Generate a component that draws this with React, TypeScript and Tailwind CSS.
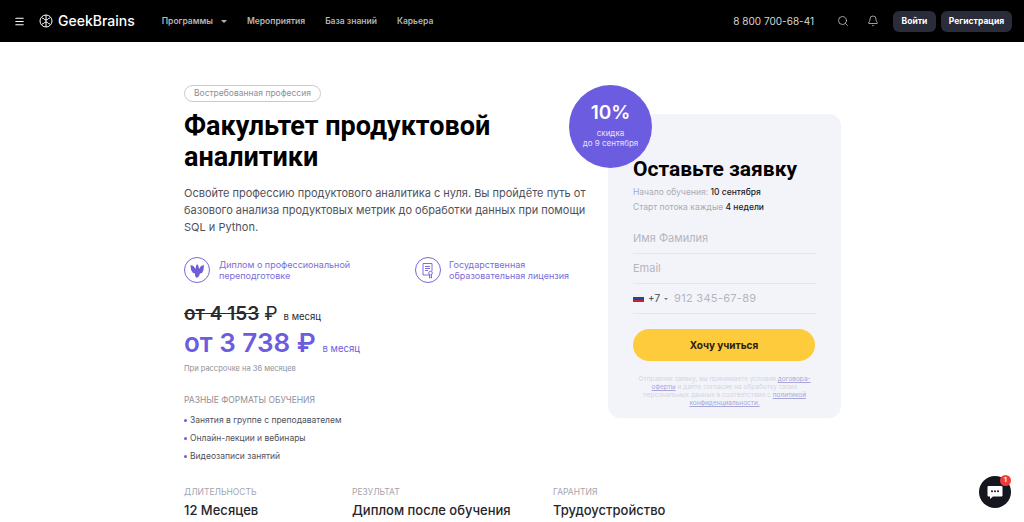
import { Bell, Menu, Search } from "lucide-react";

const navItems = ["Мероприятия", "База знаний", "Карьера"];
const formats = ["Занятия в группе с преподавателем", "Онлайн-лекции и вебинары", "Видеозаписи занятий"];
const stats = [
  { label: "ДЛИТЕЛЬНОСТЬ", value: "12 Месяцев", width: "w-[168px]" },
  { label: "РЕЗУЛЬТАТ", value: "Диплом после обучения", width: "w-[201px]" },
  { label: "ГАРАНТИЯ", value: "Трудоустройство", width: "w-[150px]" },
];

function Logo() {
  return (
    <svg width="14" height="14" viewBox="0 0 14 14" fill="none" stroke="white" strokeWidth="1">
      <circle cx="7" cy="7" r="6" />
      <path d="M7 1v12M3 4c2 0 2 2 4 2s2-2 4-2M3 10c2 0 2-2 4-2s2 2 4 2" />
    </svg>
  );
}

function Header() {
  return (
    <header className="h-[42px] shrink-0 bg-black flex items-center text-white font-['Inter',sans-serif]">
      <Menu className="ml-[14px] w-[11px] h-[11px]" strokeWidth={2.5} />
      <div className="ml-[14px] flex items-center gap-[5px]">
        <Logo />
        <span className="text-[14px] font-medium leading-none">GeekBrains</span>
      </div>
      <nav className="ml-[27px] flex items-center text-[8.5px] font-semibold text-[#b5b5b5]">
        <span>Программы</span>
        <span className="ml-[8px] mr-[20px] w-0 h-0 border-x-[3px] border-x-transparent border-t-[3px] border-t-[#b5b5b5]" />
        {navItems.map((item) => (
          <span key={item} className="mr-[20px]">{item}</span>
        ))}
      </nav>
      <span className="ml-auto text-[10px] text-[#d8d8d8]">8 800 700-68-41</span>
      <Search className="ml-[23px] w-[12px] h-[12px] text-[#d0d0d0]" strokeWidth={1.5} />
      <Bell className="ml-[18px] w-[12px] h-[12px] text-[#d0d0d0]" strokeWidth={1.5} />
      <button className="ml-[14px] h-[21px] w-[43px] rounded-[6px] bg-[#2a2c3a] text-[8.5px] font-bold">Войти</button>
      <button className="ml-[5px] mr-[12px] h-[21px] w-[71px] rounded-[6px] bg-[#2a2c3a] text-[8.5px] font-bold">Регистрация</button>
    </header>
  );
}

function Emblem() {
  return (
    <span className="w-[26px] h-[26px] rounded-full border border-[#7b68d9] flex items-center justify-center">
      <svg width="16" height="17" viewBox="0 0 16 17" fill="#6f5fd6">
        <path d="M8 2l1.5 2 .5 3 2-3 3-1-.5 5-1.5 3-2 .5L10 14l-2 2-2-2 .0-2.500L4 11 2 8 1.500 3l3 1 2 3 .5-3z" />
      </svg>
    </span>
  );
}

function LicenseIcon() {
  return (
    <span className="w-[26px] h-[26px] rounded-full border border-[#7b68d9] flex items-center justify-center">
      <svg width="14" height="17" viewBox="0 0 14 17" fill="none" stroke="#6f5fd6" strokeWidth="0.9">
        <path d="M8 13H2V1.500h9V9M4 4.500h5M4 6.500h5M4 8.500h3" />
        <circle cx="9.500" cy="11" r="1.800" />
        <path d="M8.500 13v3l1-.7 1 .7v-3" />
      </svg>
    </span>
  );
}

function Form() {
  return (
    <div className="relative ml-[39px] mt-[72px] w-[233px] h-[304px] shrink-0 rounded-[12px] bg-[#f3f4fa] px-[25px] pt-[43px]">
      <div className="absolute -left-[39px] -top-[29px] w-[83px] h-[83px] rounded-full bg-[#6c5ce0] flex flex-col items-center text-white">
        <span className="mt-[17px] text-[19px] leading-[22px] font-semibold font-['Inter',sans-serif]">10%</span>
        <span className="mt-[4px] text-[8px] leading-[10px] text-center text-[#e6e3fa]">скидка<br />до 9 сентября</span>
      </div>
      <h2 className="text-[21px] leading-[24px] font-bold text-black whitespace-nowrap font-['Roboto',sans-serif]">Оставьте заявку</h2>
      <p className="mt-[4px] text-[8.5px] leading-[15px] text-[#a9abb5]">Начало обучения: <span className="text-[#1d1d24] font-medium">10 сентября</span></p>
      <p className="text-[8.5px] leading-[15px] text-[#a9abb5]">Старт потока каждые <span className="text-[#1d1d24] font-medium">4 недели</span></p>
      <div className="mt-[9px] h-[30px] border-b border-[#e4e5ee] flex items-center text-[11px] text-[#b4b6c0]">Имя Фамилия</div>
      <div className="h-[30px] border-b border-[#e4e5ee] flex items-center text-[11px] text-[#b4b6c0]">Email</div>
      <div className="h-[30px] border-b border-[#e4e5ee] flex items-center text-[11px] text-[#b4b6c0]">
        <span className="w-[11px] h-[7px] flex flex-col overflow-hidden">
          <span className="h-[2px] bg-[#f0f0f0]" />
          <span className="h-[3px] bg-[#23439c]" />
          <span className="h-[2px] bg-[#c8202f]" />
        </span>
        <span className="ml-[4px] text-[10px] text-[#444650]">+7</span>
        <span className="ml-[4px] w-0 h-0 border-x-[2px] border-x-transparent border-t-[2px] border-t-[#777]" />
        <span className="ml-[6px] tracking-[0.3px]">912 345-67-89</span>
      </div>
      <button className="mt-[15px] w-[182px] h-[32px] rounded-full bg-[#fdcb3c] text-[10px] font-bold text-[#2b2110] font-['Inter',sans-serif]">Хочу учиться</button>
      <p className="mt-[14px] text-[6.5px] leading-[8px] text-center text-[#d3d5e0]">
        Отправляя заявку, вы принимаете условия <span className="underline text-[#a9a6da]">договора-оферты</span> и даёте согласие на обработку своих персональных данных в соответствии с <span className="underline text-[#a9a6da]">политикой конфиденциальности.</span>
      </p>
    </div>
  );
}

export default function App() {
  return (
    <div className="h-[522px] w-[1024px] overflow-hidden relative bg-white flex flex-col font-['Inter',sans-serif]">
      <Header />
      <main className="flex pl-[184px]">
        <div className="w-[385px] shrink-0">
          <span className="mt-[43px] inline-flex h-[17px] items-center rounded-full border border-[#c9cad2] px-[9px] text-[8.5px] text-[#8e8f99]">Востребованная профессия</span>
          <h1 className="mt-[9px] text-[27px] leading-[31px] font-bold text-black font-['Roboto',sans-serif]">Факультет продуктовой<br />аналитики</h1>
          <p className="mt-[12px] text-[11px] leading-[17px] text-[#50515a] whitespace-nowrap">
            Освойте профессию продуктового аналитика с нуля. Вы пройдёте путь от<br />
            базового анализа продуктовых метрик до обработки данных при помощи<br />
            SQL и Python.
          </p>
          <div className="mt-[21px] flex items-center">
            <Emblem />
            <span className="ml-[9px] w-[197px] text-[9px] leading-[11px] text-[#7b6dd8]">Диплом о профессиональной<br />переподготовке</span>
            <LicenseIcon />
            <span className="ml-[8px] text-[9px] leading-[11px] text-[#7b6dd8] whitespace-nowrap">Государственная<br />образовательная лицензия</span>
          </div>
          <div className="mt-[19px] flex items-baseline text-[#2a2a30]">
            <span className="text-[19px] leading-[24px] font-semibold line-through">от 4 153 </span>
            <span className="ml-[5px] text-[19px] leading-[24px]">₽</span>
            <span className="ml-[6px] text-[9.5px]">в месяц</span>
          </div>
          <div className="mt-[1px] flex items-baseline text-[#6c5ce0]">
            <span className="text-[26px] leading-[32px] font-semibold">от 3 738 ₽</span>
            <span className="ml-[7px] text-[9.500px]">в месяц</span>
          </div>
          <p className="mt-[5px] text-[7.500px] leading-[10px] text-[#8e8f99]">При рассрочке на 36 месяцев</p>
          <p className="mt-[21px] text-[8.500px] leading-[10px] text-[#8e8f99]">РАЗНЫЕ ФОРМАТЫ ОБУЧЕНИЯ</p>
          <ul className="mt-[10px] flex flex-col gap-[8px]">
            {formats.map((item) => (
              <li key={item} className="flex items-center text-[8.500px] leading-[10px] text-[#50515a]">
                <span className="mr-[3px] w-[3px] h-[3px] rounded-full bg-[#6c5ce0]" />
                {item}
              </li>
            ))}
          </ul>
          <div className="mt-[26px] flex w-[520px]">
            {stats.map((s) => (
              <div key={s.label} className={s.width}>
                <p className="text-[8.500px] leading-[10px] text-[#a4a5ae]">{s.label}</p>
                <p className="mt-[5px] text-[13px] leading-[16px] font-medium text-[#25252b] whitespace-nowrap">{s.value}</p>
              </div>
            ))}
          </div>
        </div>
        <Form />
      </main>
      <div className="absolute left-[979px] top-[476px] w-[32px] h-[32px] rounded-full bg-[#16161e] flex items-center justify-center">
        <svg width="16" height="15" viewBox="0 0 16 15">
          <path d="M1.500 1h13a1 1 0 0 1 1 1v8.500a1 1 0 0 1-1 1H6L3 14v-2.500H1.500a1 1 0 0 1-1-1V2a1 1 0 0 1 1-1z" fill="white" />
          <circle cx="5" cy="6.200" r="1" fill="#16161e" />
          <circle cx="8" cy="6.200" r="1" fill="#16161e" />
          <circle cx="11" cy="6.200" r="1" fill="#16161e" />
        </svg>
        <span className="absolute -top-[1px] right-0 w-[11px] h-[11px] rounded-full bg-[#ef3b3b] text-white text-[6.500px] font-bold flex items-center justify-center">1</span>
      </div>
    </div>
  );
}
